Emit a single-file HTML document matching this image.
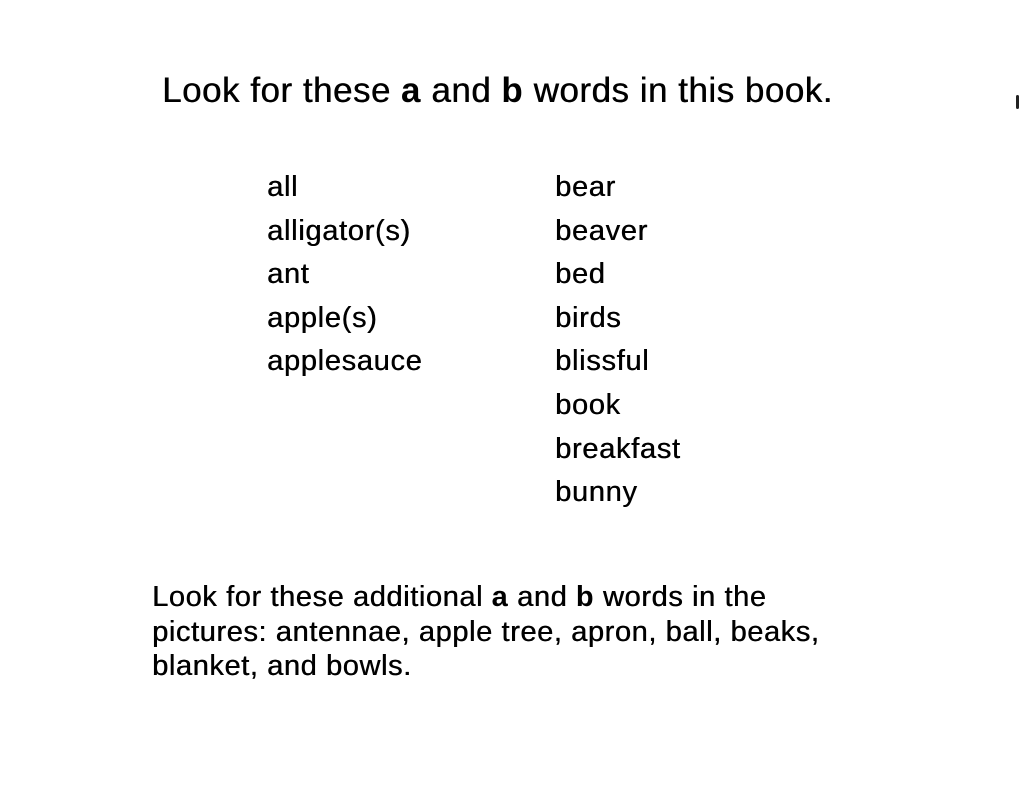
<!DOCTYPE html>
<html><head><style>
body{margin:0;width:1020px;height:787px;background:#fff;font-family:"Liberation Sans",Arial,sans-serif;color:#000;position:relative;overflow:hidden;text-shadow:0.45px 0 0 #000}
b{text-shadow:none}
.t{position:absolute;left:162px;top:71px;font-size:35px;line-height:40px;letter-spacing:0.5px;white-space:nowrap}
.col{position:absolute;top:166px;font-size:29px;line-height:43.6px;letter-spacing:0.7px}
.p{position:absolute;left:152px;top:580px;font-size:29px;line-height:34.5px;letter-spacing:0.6px;white-space:nowrap}
.edge{position:absolute;left:1016px;top:95px;width:3px;height:14px;background:#222;border-radius:2px}
</style></head><body>
<div class="t">Look for these <b>a</b> and <b>b</b> words in this book.</div>
<div class="col" style="left:267px">all<br>alligator(s)<br>ant<br>apple(s)<br>applesauce</div>
<div class="col" style="left:555px">bear<br>beaver<br>bed<br>birds<br>blissful<br>book<br>breakfast<br>bunny</div>
<div class="p">Look for these additional <b>a</b> and <b>b</b> words in the<br>pictures: antennae, apple tree, apron, ball, beaks,<br>blanket, and bowls.</div>
<div class="edge"></div>
</body></html>
